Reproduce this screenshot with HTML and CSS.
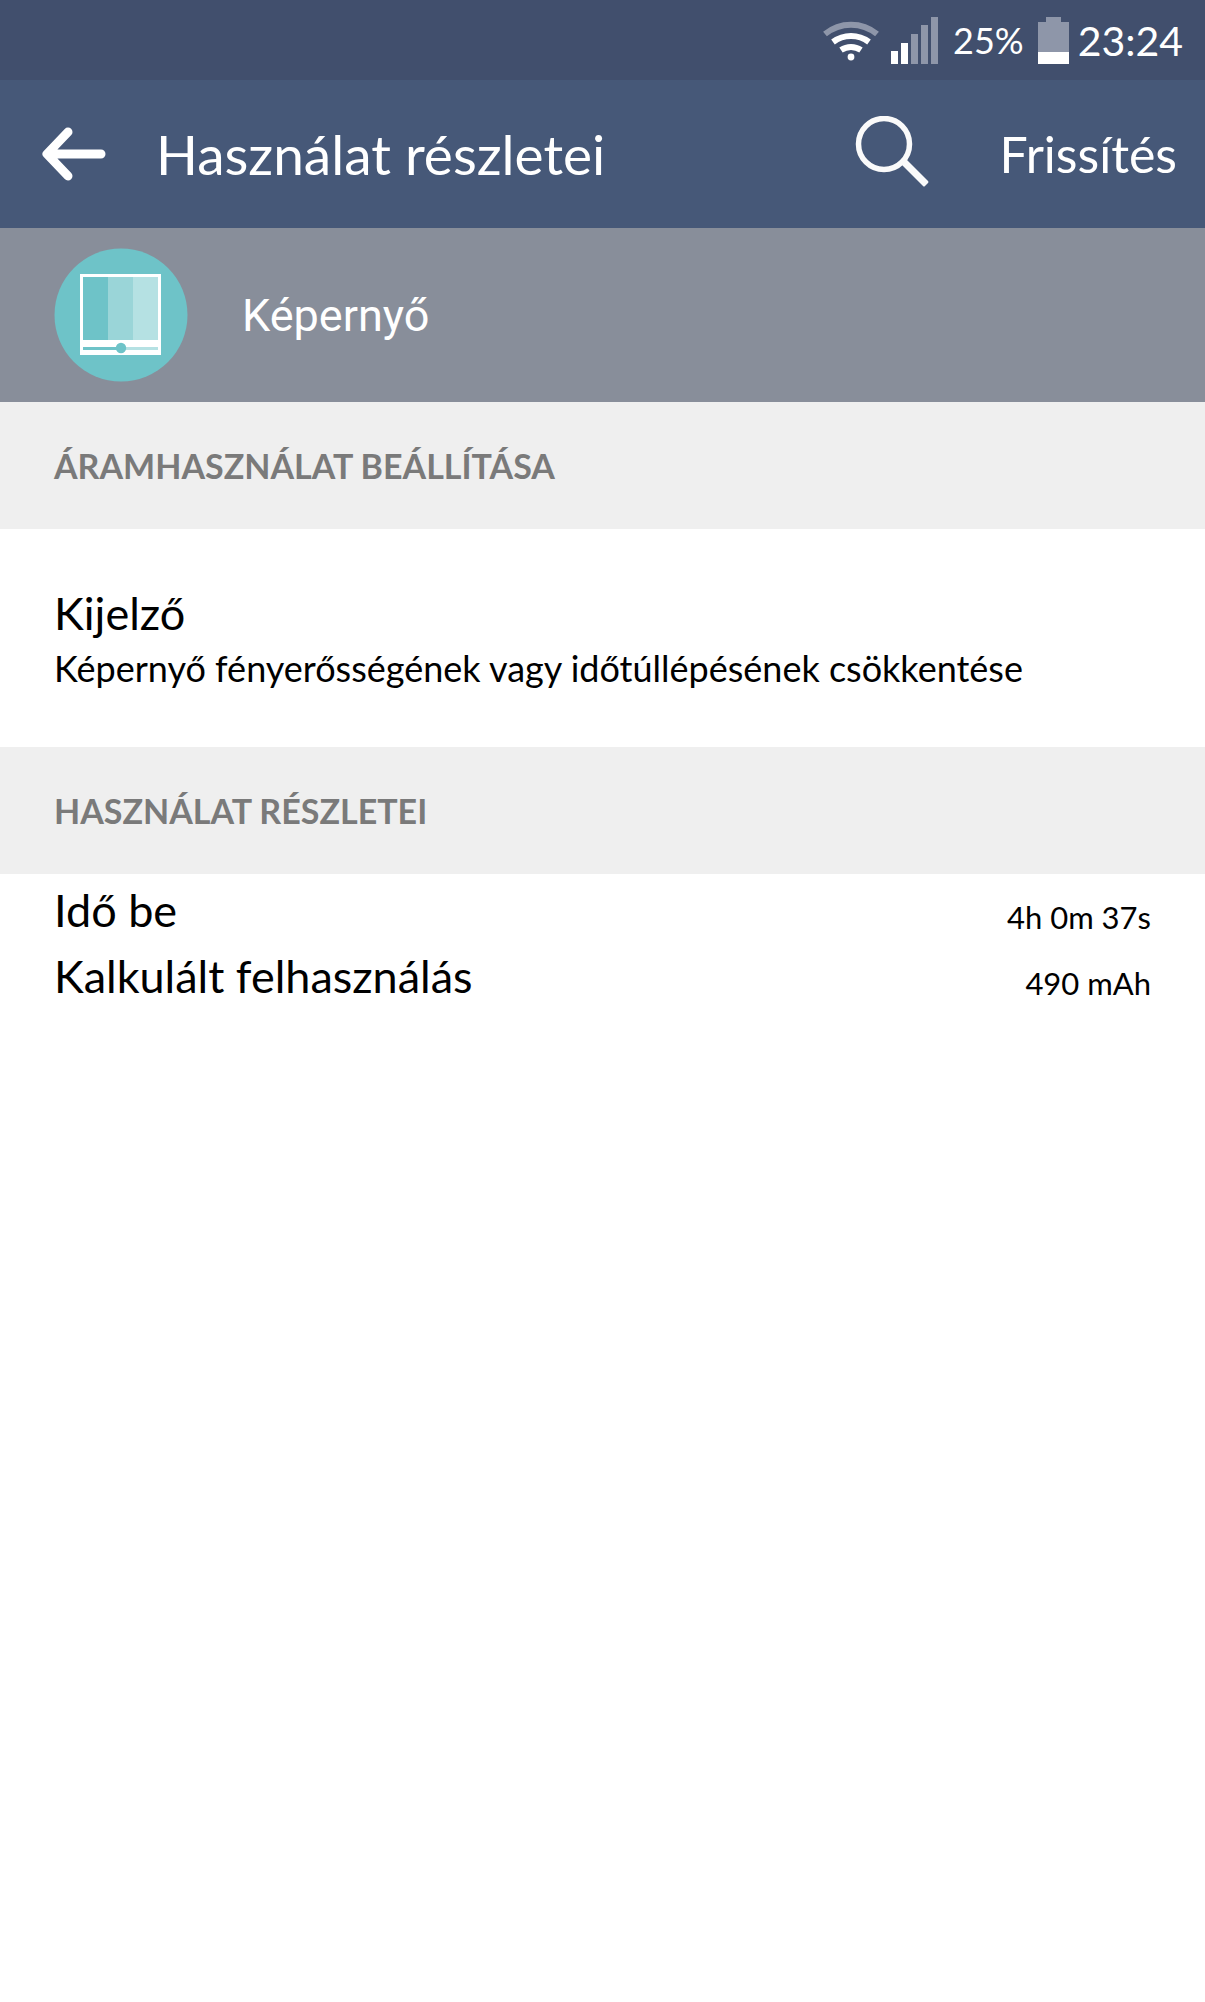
FILE: index.html
```html
<!DOCTYPE html>
<html lang="hu">

<head>
<meta charset="UTF-8">
<meta name="viewport" content="width=device-width, initial-scale=1.0">
<title>Használat részletei</title>
<link rel="stylesheet" href="styles.css">
</head>

<body>
<!-- Status bar -->
<div class="status-bar">
<svg class="wifi" width="56" height="42" viewBox="0 0 56 42" fill="none" stroke-width="6" aria-hidden="true">
<path d="M2 15A41 41 0 0 1 54 15" stroke="#8e96a9"/>
<path d="M10 23A30 30 0 0 1 46 23" stroke="#fff"/>
<path d="M18 31A18 18 0 0 1 38 31" stroke="#fff"/>
<circle cx="28" cy="38" r="3.4" fill="#fff"/>
</svg>
<svg class="signal" width="47" height="47" viewBox="0 0 47 47" aria-hidden="true">
<path d="M0 34h7v13H0zM10 26h7v21h-7z" fill="#fff"/>
<path d="M20 17h7v30h-7zM30 8h7v39h-7zM40 0h7v47h-7z" fill="#8e96a9"/>
</svg>
<span class="percent">25%</span>
<svg class="battery" width="31" height="47" viewBox="0 0 31 47" aria-hidden="true">
<path d="M8 0h15v5h8v30H0V5h8z" fill="#8e96a9"/>
<path d="M0 35h31v12H0z" fill="#fff"/>
</svg>
<span class="clock">23:24</span>
</div>

<!-- Title bar -->
<header>
<button class="back" aria-label="Vissza">
<svg width="66" height="54" viewBox="0 0 66 54" fill="none" stroke="#fff" stroke-width="9" stroke-linecap="round" stroke-linejoin="round">
<path d="M28 5L7 27l21 22M8 27h53"/>
</svg>
</button>
<h1>Használat részletei</h1>
<button class="search" aria-label="Keresés">
<svg width="76" height="76" viewBox="0 0 76 76" fill="none" stroke="#fafafa">
<circle cx="30" cy="28" r="25.5" stroke-width="5.5"/>
<path d="M46 47l5-5 23 23q1 1 0 2l-3 3q-1 1-2 0z" fill="#fafafa" stroke="none"/>
</svg>
</button>
<button class="refresh">Frissítés</button>
</header>

<div class="app">
<svg width="134" height="134" viewBox="0 0 134 134" aria-hidden="true">
<circle cx="67" cy="67" r="66.5" fill="#6ec3c8"/>
<path d="M26 26h81v81H26z" fill="#fff"/>
<path d="M29 29h25v63H29z" fill="#6ec3c8"/>
<path d="M54 29h25v63H54z" fill="#9ad5d8"/>
<path d="M79 29h25v63H79z" fill="#b5e1e3"/>
<path d="M29 99h38v3H29z" fill="#6ec3c8"/>
<path d="M67 99h37v3H67z" fill="#b5e1e3"/>
<circle cx="67" cy="100" r="5.2" fill="#6ec3c8"/>
</svg>
<span>Képernyő</span>
</div>

<main>
<!-- Power settings -->
<h2>ÁRAMHASZNÁLAT BEÁLLÍTÁSA</h2>
<a class="setting" href="#">
<span class="setting-title">Kijelző</span>
<span class="setting-text">Képernyő fényerősségének vagy időtúllépésének csökkentése</span>
</a>

<!-- Usage details -->
<h2>HASZNÁLAT RÉSZLETEI</h2>
<table>
<tr>
<th scope="row">Idő be</th>
<td>4h 0m 37s</td>
</tr>
<tr>
<th scope="row">Kalkulált felhasználás</th>
<td>490 mAh</td>
</tr>
</table>
</main>
</body>

</html>
```

FILE: styles.css
```css
* {
box-sizing: border-box;
}

body {
margin: 0;
background-color: #fff;
color: #000;
font-family: Lato, "Open Sans", sans-serif;
}

svg {
display: block;
flex: none;
}

.status-bar {
display: flex;
align-items: center;
justify-content: flex-end;
height: 80px;
padding-right: 22px;
background-color: #414f6d;
color: #fff;
}

.signal {
margin: 0 15px 0 12px;
}

.percent {
font-size: 36px;
}

.battery {
margin: 0 9px 0 14px;
}

.clock {
font-size: 41px;
}

header {
display: flex;
align-items: center;
height: 148px;
padding: 0 28px 0 40px;
background-color: #465878;
color: #fff;
}

button {
padding: 0;
border: 0;
background: none;
color: inherit;
font-family: inherit;
cursor: pointer;
}

h1 {
flex: 1;
margin: 0 0 0 50px;
font-size: 55px;
font-weight: 400;
white-space: nowrap;
}

.search {
margin-right: 70px;
}

.refresh {
font-size: 50px;
}

.app {
display: flex;
align-items: center;
gap: 54px;
height: 174px;
padding: 0 54px;
background-color: #888e9a;
color: #fff;
font-family: Roboto, sans-serif;
font-size: 45px;
}

h2 {
margin: 0;
padding: 40px 54px;
background-color: #efefef;
color: #7a7a7a;
font-size: 34px;
font-weight: 700;
line-height: 47px;
}

.setting {
display: block;
padding: 54px;
color: inherit;
text-decoration: none;
}

.setting-title,
.setting-text {
display: block;
}

.setting-title {
font-size: 45px;
line-height: 60px;
}

.setting-text {
font-size: 36px;
line-height: 50px;
}

table {
width: 100%;
border-collapse: collapse;
}

th,
td {
height: 66px;
padding: 0 54px;
vertical-align: bottom;
}

th {
font-size: 45px;
font-weight: 400;
line-height: 60px;
text-align: left;
}

td {
font-size: 31px;
line-height: 46px;
text-align: right;
}
```
